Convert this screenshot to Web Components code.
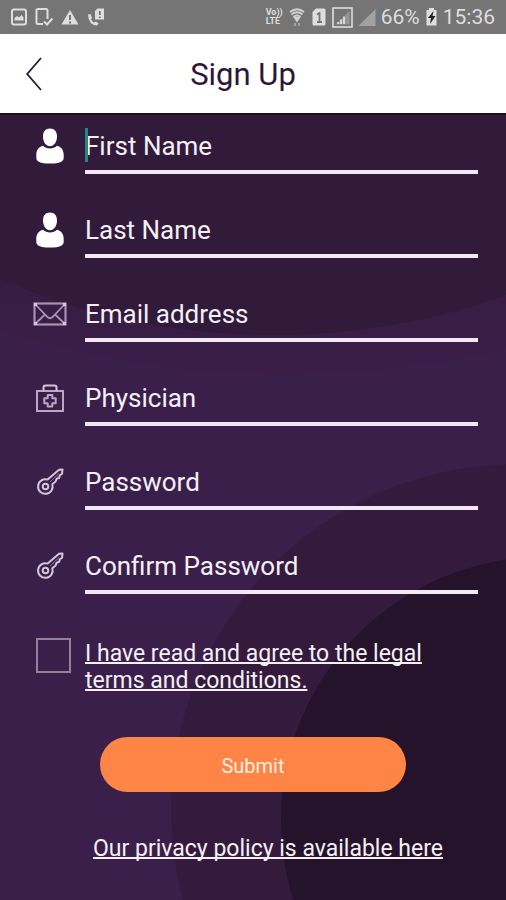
<!DOCTYPE html>
<html lang="en">
<head>
<meta charset="utf-8">
<meta name="viewport" content="width=device-width, initial-scale=1">
<title>Sign Up</title>
<style>
  body {
    margin: 0;
    background: #3b1f4b;
    font-family: Roboto, "Liberation Sans", sans-serif;
  }
</style>
</head>
<body>
<signup-screen></signup-screen>

<script>
/**
 * Line icons for the form rows
 */
const ICONS = {
  person: `<svg width="28" height="36" viewBox="0 0 28 36" fill="#fff">
    <path d="M14 .500c4.600 0 7 3.200 7 8 0 5.500-3 9.700-7 9.700s-7-4.200-7-9.700c0-4.800 2.400-8 7-8z"/>
    <path d="M7 17.800C9 19.800 11.200 20.400 14 20.400s5-.6 7-2.600c4.500 1 6.700 4.700 6.700 9.200v2.500c0 4-3.500 6-13.700 6S.300 33.500.300 29.500V27c0-4.500 2.200-8.200 6.700-9.200z"/>
  </svg>`,
  mail: `<svg width="34" height="24" viewBox="0 0 34 24" fill="none" stroke="#a892b0" stroke-width="2.200">
    <rect x="1.500" y="1.500" width="31" height="21"/>
    <path d="M2 2l12.500 13q2.500 2.400 5 0L32 2M2 22l10-9.500M32 22l-10-9.500" stroke-width="1.800"/>
    <path d="M1 1h3v3H1zM30 1h3v3h-3zM1 20h3v3H1zM30 20h3v3h-3z" fill="#d8c8dc" stroke="none"/>
  </svg>`,
  medical: `<svg width="30" height="28" viewBox="0 0 30 28" fill="none" stroke="#bba7c3" stroke-width="2">
    <rect x="2" y="7" width="26" height="20"/>
    <path d="M8.500 7V3.500q0-2 2-2h9q2 0 2 2V7" stroke="#d3c4d8"/>
    <path d="M12.700 11h4.600v3.300h3.400v4.900h-3.400v3.300h-4.600v-3.300H9.300v-4.900h3.400z" stroke-width="2" stroke-linejoin="round"/>
  </svg>`,
  key: `<svg width="28" height="28" viewBox="0 0 28 28" fill="none" stroke="#d3c6d8" stroke-width="2" stroke-linejoin="round">
    <path d="M11.700 11.600L23 1.800l3.500-.4-.4 4.300-2.300 1.600-.6 2.600-2.600.9-1 2.700-3.300 2.700A7.300 7.300 0 1 1 11.700 11.600z"/>
    <circle cx="9.500" cy="18.500" r="2.800"/>
    <path d="M14 14l9-8.500" stroke-width="1" stroke="#8d7499"/>
  </svg>`
};

/**
 * Android style status bar
 */
class StatusBar extends HTMLElement {
  constructor() {
    super();
    this.attachShadow({ mode: 'open' });
  }

  connectedCallback() {
    this.shadowRoot.innerHTML = `
      <style>
        :host {
          display: flex;
          align-items: center;
          justify-content: space-between;
          height: 34px;
          padding: 0 11px;
          box-sizing: border-box;
          background: #757575;
          color: #dedede;
          font-size: 21px;
          line-height: 24px;
        }

        .group {
          display: flex;
          align-items: center;
          gap: 8px;
        }

        .system {
          gap: 5px;
        }

        .volte {
          font-size: 9px;
          font-weight: 700;
          line-height: 9px;
        }

        .volte span {
          display: block;
        }

        svg {
          display: block;
        }
      </style>

      <div class="group">
        <svg width="16" height="18" viewBox="0 0 16 18">
          <rect x="1" y="1.500" width="14" height="15" rx="2" fill="none" stroke="#dedede" stroke-width="2"/>
          <path d="M3.500 12.500V10l2.500-2 2 1.500L10.500 7l2 2.500v3z" fill="#dedede"/>
        </svg>
        <svg width="18" height="18" viewBox="0 0 18 18" fill="none" stroke="#dedede" stroke-width="2">
          <path d="M12.500 11V2.500q0-1.500-1.500-1.500H3Q1.500 1 1.500 2.500v12Q1.500 16 3 16h5"/>
          <path d="M9 13.500l3 3 5.500-6"/>
        </svg>
        <svg width="18" height="18" viewBox="0 0 18 18">
          <path d="M9 2l8.500 14.500H.500z" fill="#dedede"/>
          <path d="M9 7v5M9 13.500v2" stroke="#757575" stroke-width="2"/>
        </svg>
        <svg width="18" height="18" viewBox="0 0 18 18">
          <path d="M1 6.500l2.500-.5 1.500 4-1 1.500q1.500 2.500 3.500 3l1.500-1 2.500 2-1.500 2Q1.500 17 1 6.500z" fill="#dedede"/>
          <path d="M10.500 .500H17v11H8V3z" fill="#dedede"/>
          <path d="M12.800 3v4M12.800 8.500V10" stroke="#757575" stroke-width="1.800"/>
        </svg>
      </div>

      <div class="group system">
        <div class="volte"><span>Vo))</span><span>LTE</span></div>
        <svg width="18" height="20" viewBox="0 0 18 20" fill="none" stroke="#d2d2d2" stroke-width="1.800">
          <path d="M2 5q7-5.500 14 0M3.500 7.500q5.500-4.500 11 0M5.500 10q3.500-3 7 0"/>
          <path d="M7 11l2 3 2-3z" fill="#d2d2d2"/>
          <path d="M7 16v3M11 16v3" stroke="#a8a8a8"/>
        </svg>
        <svg width="16" height="20" viewBox="0 0 16 20">
          <path d="M5 1.500h8q1.500 0 1.500 1.500v14q0 1.500-1.500 1.500H3Q1.500 18.500 1.500 17V5z" fill="#dedede"/>
          <path d="M6 7.500L8.500 6v9M6 15h5" fill="none" stroke="#757575" stroke-width="1.800"/>
        </svg>
        <svg width="21" height="21" viewBox="0 0 21 21">
          <rect x="1" y="1" width="19" height="19" fill="none" stroke="#dedede" stroke-width="1.600"/>
          <path d="M17.500 4v13.500H4z" fill="#969696"/>
          <path d="M6 15v2M9 12.500V17M12 9.500V17" stroke="#dedede" stroke-width="1.800"/>
        </svg>
        <svg width="18" height="20" viewBox="0 0 18 20">
          <path d="M17.500 2v17H.500z" fill="#a2a2a2"/>
        </svg>
        <span>66%</span>
        <svg width="13" height="20" viewBox="0 0 13 20">
          <path d="M4 1h5v2h2.500v15.500h-10V3H4z" fill="#dedede"/>
          <path d="M8.500 4L3 11h3l-1 6 5.500-8H7.500z" fill="#222"/>
        </svg>
        <span>15:36</span>
      </div>
    `;
  }
}

/**
 * Header with a back link and the page title in the slot
 */
class TopBar extends HTMLElement {
  constructor() {
    super();
    this.attachShadow({ mode: 'open' });
  }

  connectedCallback() {
    this.shadowRoot.innerHTML = `
      <style>
        :host {
          display: grid;
          grid-template-columns: 48px 1fr 48px;
          align-items: center;
          height: 79px;
          padding: 2px 20px 0 0;
          box-sizing: border-box;
          background: #fff;
          color: #2c1738;
        }

        button {
          display: flex;
          justify-content: flex-end;
          padding: 0 6px 2px 0;
          border: 0;
          background: none;
          color: inherit;
        }

        h1 {
          margin: 0;
          font-size: 31px;
          font-weight: 400;
          line-height: 36px;
          text-align: center;
        }
      </style>

      <button type="button" aria-label="Back">
        <svg width="16" height="34" viewBox="0 0 16 34" fill="none" stroke="currentColor" stroke-width="1.800">
          <path d="M15 1L1.200 17 15 33"/>
        </svg>
      </button>
      <h1><slot></slot></h1>
    `;
  }
}

/**
 * Underlined text field with an icon on its left
 */
class FormField extends HTMLElement {
  constructor() {
    super();
    this.attachShadow({ mode: 'open' });
  }

  connectedCallback() {
    const icon = this.getAttribute('icon');
    const label = this.getAttribute('label') || '';
    const type = this.getAttribute('type') || 'text';

    this.shadowRoot.innerHTML = `
      <style>
        :host {
          display: grid;
          grid-template-columns: 36px 1fr;
          column-gap: 17px;
          position: relative;
        }

        label {
          display: flex;
          align-items: center;
          justify-content: center;
          padding-bottom: 6px;
        }

        input {
          width: 100%;
          height: 50px;
          padding: 0 0 2px;
          box-sizing: border-box;
          border: 0;
          border-bottom: 4px solid #f1e8f3;
          border-radius: 0;
          outline: none;
          background: none;
          color: #f5f0f6;
          font: inherit;
          font-size: 26px;
        }

        input::placeholder {
          color: #f5f0f6;
          opacity: 1;
        }

        /* text cursor of the active field */
        :host([active])::before {
          content: "";
          position: absolute;
          left: 53px;
          top: 4px;
          width: 3px;
          height: 34px;
          background: #1f8a85;
        }
      </style>

      <label for="field">${ICONS[icon]}</label>
      <input id="field" type="${type}" placeholder="${label}" aria-label="${label}">
    `;
  }
}

/**
 * Tick box with its linked text in the slot
 */
class TermsCheck extends HTMLElement {
  constructor() {
    super();
    this.attachShadow({ mode: 'open' });
  }

  connectedCallback() {
    this.shadowRoot.innerHTML = `
      <style>
        :host {
          display: grid;
          grid-template-columns: 35px 1fr;
          column-gap: 14px;
          align-items: start;
        }

        input {
          appearance: none;
          width: 35px;
          height: 35px;
          margin: 0;
          border: 2px solid #91829a;
        }

        input:checked {
          background: #91829a;
        }

        label {
          padding: 2px 32px 0 0;
          color: #f5f0f6;
          font-size: 23px;
          line-height: 27px;
          text-decoration: underline;
          text-decoration-thickness: 2px;
          text-underline-offset: 1px;
          text-decoration-skip-ink: none;
        }
      </style>

      <input id="terms" type="checkbox">
      <label for="terms"><slot></slot></label>
    `;
  }
}

class SubmitButton extends HTMLElement {
  constructor() {
    super();
    this.attachShadow({ mode: 'open' });
  }

  connectedCallback() {
    this.shadowRoot.innerHTML = `
      <style>
        :host {
          display: block;
        }

        button {
          display: block;
          width: 100%;
          height: 55px;
          padding: 2px 0 0;
          border: 0;
          border-radius: 28px;
          background: #ff8546;
          color: #ffeee0;
          font: inherit;
          font-size: 20px;
        }
      </style>

      <button type="submit"><slot></slot></button>
    `;
  }
}

/**
 * Whole sign up page
 */
class SignupScreen extends HTMLElement {
  constructor() {
    super();
    this.attachShadow({ mode: 'open' });
  }

  connectedCallback() {
    this.shadowRoot.innerHTML = `
      <style>
        :host {
          display: flex;
          flex-direction: column;
          min-height: 100vh;
        }

        main {
          position: relative;
          flex: 1;
          overflow: hidden;
          background: #3b1f4b;
        }

        .backdrop {
          position: absolute;
          inset: 0;
          width: 100%;
          height: 100%;
        }

        form {
          position: relative;
          display: flex;
          flex-direction: column;
          padding: 11px 28px 36px 32px;
        }

        .fields {
          display: grid;
          gap: 34px;
        }

        terms-check {
          margin: 44px 0 43px 4px;
        }

        submit-button {
          margin: 0 72px 0 68px;
        }

        .privacy {
          align-self: center;
          margin: 43px 0 0 26px;
          color: #f5f0f6;
          font-size: 23px;
          line-height: 27px;
          text-decoration-thickness: 2px;
          text-underline-offset: 1px;
          text-decoration-skip-ink: none;
        }
      </style>

      <status-bar></status-bar>
      <top-bar>Sign Up</top-bar>

      <main>
        <svg class="backdrop" viewBox="0 0 506 787" preserveAspectRatio="none" aria-hidden="true">
          <defs>
            <linearGradient id="shade" x1="0" y1="0" x2="0" y2="1">
              <stop offset="0.800" stop-color="#351b3f"/>
              <stop offset="1" stop-color="#3a1e48"/>
            </linearGradient>
          </defs>
          <ellipse cx="285" cy="-93" rx="580" ry="355" fill="url(#shade)"/>
          <ellipse cx="273" cy="-93" rx="476" ry="315" fill="#311a3a"/>
          <circle cx="517" cy="697" r="346" fill="#341b3e"/>
          <circle cx="544" cy="707" r="263" fill="#25132b"/>
          <path d="M0 0h506v2H0z" fill="#1e1024"/>
        </svg>

        <form>
          <div class="fields">
            <form-field icon="person" label="First Name" active></form-field>
            <form-field icon="person" label="Last Name"></form-field>
            <form-field icon="mail" label="Email address" type="email"></form-field>
            <form-field icon="medical" label="Physician"></form-field>
            <form-field icon="key" label="Password" type="password"></form-field>
            <form-field icon="key" label="Confirm Password" type="password"></form-field>
          </div>
          <terms-check>I have read and agree to the legal terms and conditions.</terms-check>
          <submit-button>Submit</submit-button>
          <a class="privacy" href="#privacy">Our privacy policy is available here</a>
        </form>
      </main>
    `;
  }
}

customElements.define('status-bar', StatusBar);
customElements.define('top-bar', TopBar);
customElements.define('form-field', FormField);
customElements.define('terms-check', TermsCheck);
customElements.define('submit-button', SubmitButton);
customElements.define('signup-screen', SignupScreen);
</script>
</body>
</html>
